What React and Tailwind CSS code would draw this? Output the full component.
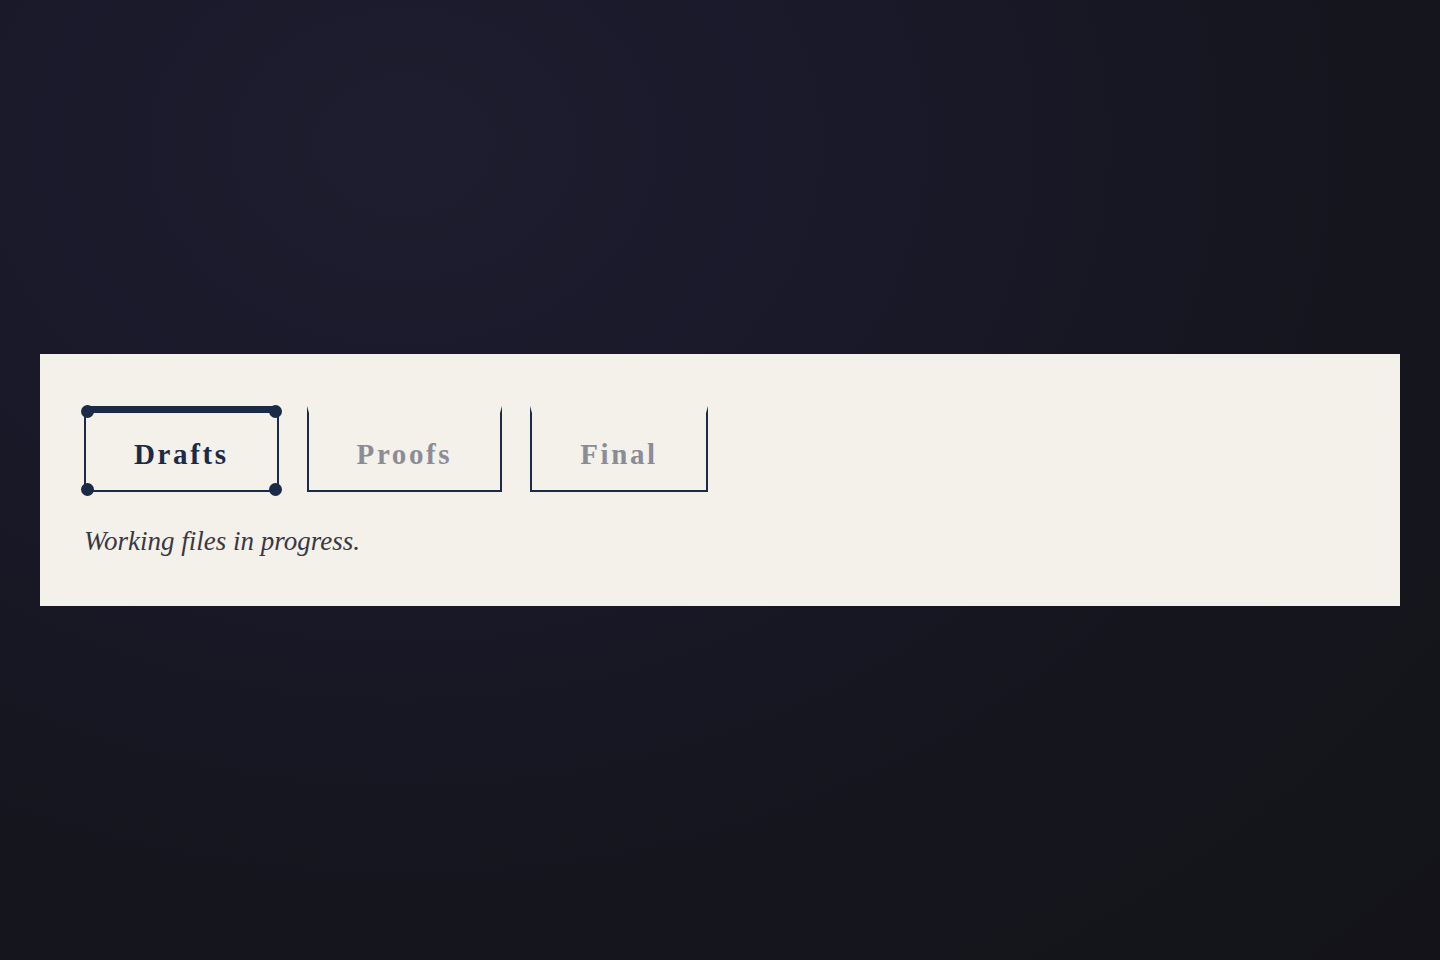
const tabs = [
	{ label: 'Drafts', active: true },
	{ label: 'Proofs', active: false },
	{ label: 'Final', active: false },
]

function Tab({ label, active }) {
	return (
		<button
			className={
				active
					? 'relative flex h-[86px] items-center border-x-2 border-b-2 border-t-[7px] border-[#1b2a47] px-12 pt-1.5 text-[29px] font-bold leading-none tracking-[0.09em] text-[#1b2a47]'
					: 'relative flex h-[86px] items-center border-x-2 border-b-2 border-t-[7px] border-[#1b2a47] border-t-transparent px-12 pt-1.5 text-[29px] font-bold leading-none tracking-[0.09em] text-[#8a8d97]'
			}
		>
			{label}
			{active && (
				<>
					<span className="absolute -left-[5px] -top-[8px] size-[13px] rounded-full bg-[#1b2a47]" />
					<span className="absolute -right-[5px] -top-[8px] size-[13px] rounded-full bg-[#1b2a47]" />
					<span className="absolute -bottom-[6px] -left-[5px] size-[13px] rounded-full bg-[#1b2a47]" />
					<span className="absolute -bottom-[6px] -right-[5px] size-[13px] rounded-full bg-[#1b2a47]" />
				</>
			)}
		</button>
	)
}

export default function App() {
	return (
		<div
			className="flex min-h-screen items-center bg-[radial-gradient(ellipse_at_28%_15%,#1d1d2f_0%,#19192a_30%,#15151d_70%,#131319_100%)] px-10"
			style={{ fontFamily: "'Liberation Serif', serif" }}
		>
			<div className="w-full bg-[#f4f0ea] pb-[47px] pl-11 pt-[52px]">
				<div className="flex gap-7">
					{tabs.map((t) => (
						<Tab key={t.label} {...t} />
					))}
				</div>
				<p className="mt-[31px] text-[27px] italic leading-[36px] text-[#383843]">Working files in progress.</p>
			</div>
		</div>
	)
}
